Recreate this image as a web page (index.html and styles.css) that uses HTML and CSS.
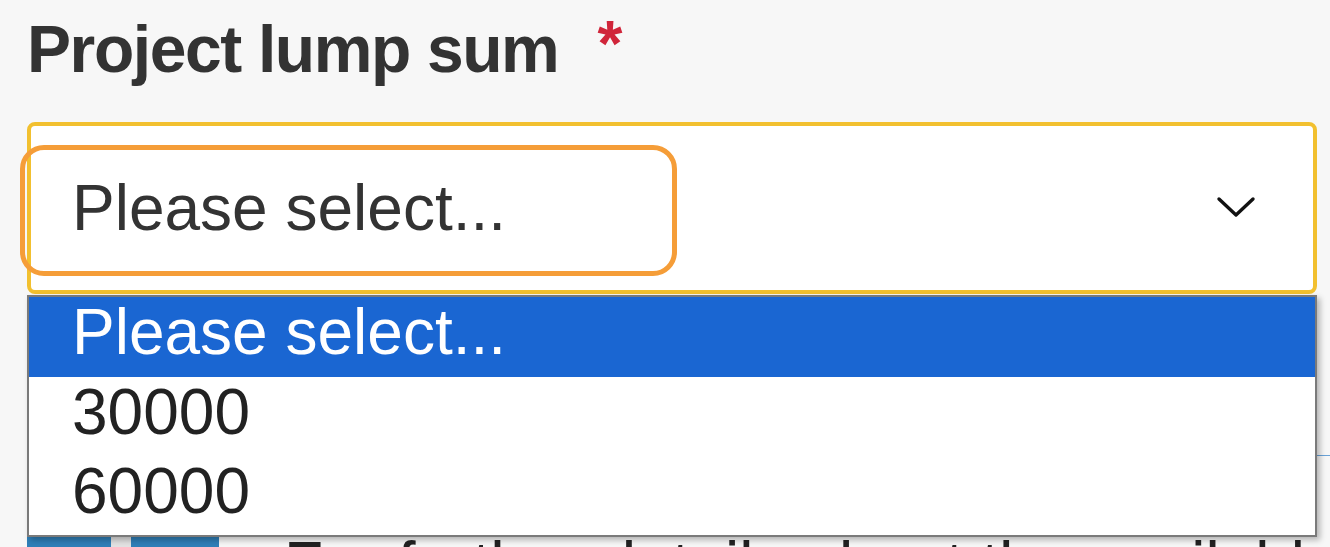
FILE: index.html
```html
<!DOCTYPE html>
<html lang="en">
<head>
<meta charset="utf-8">
<title>Project lump sum</title>
<link rel="stylesheet" href="styles.css">
</head>
<body>
<div class="page">
  <label class="label">Project lump sum<span class="req">*</span></label>
  <div class="field">
    <div class="select">
      <span class="value">Please select...</span>
      <svg class="chev" width="40" height="24" viewBox="0 0 40 24"><path d="M3 4 L20 20 L37 4" fill="none" stroke="#111" stroke-width="3.4" stroke-linecap="round" stroke-linejoin="round"/></svg>
    </div>
    <ul class="menu">
      <li class="opt active">Please select...</li>
      <li class="opt">30000</li>
      <li class="opt">60000</li>
    </ul>
    <div class="highlight"></div>
  </div>
  <div class="hidden-area"></div>
  <div class="notice">
    <div class="tabs">
      <span class="tab"></span>
      <span class="sep"></span>
      <span class="tab tab2"></span>
    </div>
    <p class="notice-text">For further details about the available</p>
  </div>
</div>
</body>
</html>
```

FILE: styles.css
```css
html, body {
  margin: 0;
  padding: 0;
  background: #f7f7f7;
  overflow: hidden;
}
body {
  font-family: "Liberation Sans", Arial, sans-serif;
  color: #333;
}
.page {
  padding: 17px 13px 0 27px;
  height: 547px;
  box-sizing: border-box;
}
.label {
  display: block;
  height: 64px;
  font-size: 66px;
  font-weight: 700;
  line-height: 64px;
  letter-spacing: -1.4px;
  color: #333;
}
.req {
  color: #d0253a;
  font-size: 64px;
  line-height: 0;
  letter-spacing: 0;
  margin-left: 39px;
  vertical-align: 6px;
}
.field {
  position: relative;
  margin-top: 41px;
}
.select {
  height: 172px;
  box-sizing: border-box;
  border: 4px solid #f2c02f;
  border-radius: 8px;
  background: #fff;
  display: flex;
  align-items: center;
  justify-content: space-between;
  padding: 0 57px 0 41px;
}
.value {
  font-size: 64px;
  line-height: 72px;
  color: #333;
}
.chev {
  display: block;
  margin-top: -2px;
}
.menu {
  position: absolute;
  left: 0;
  right: 0;
  top: calc(100% + 1px);
  margin: 0;
  padding: 0;
  list-style: none;
  background: #fff;
  border: 2px solid #7a7a7a;
  box-shadow: 3px 3px 6px rgba(0, 0, 0, 0.28);
  z-index: 2;
}
.opt {
  font-size: 64px;
  line-height: 71px;
  padding: 0 0 8px 43px;
  color: #222;
}
.opt.active {
  background: #1a66d2;
  color: #fff;
  padding-bottom: 9px;
}
.highlight {
  position: absolute;
  left: -7px;
  top: 23px;
  width: 657px;
  height: 131px;
  box-sizing: border-box;
  border: 5px solid #f59d38;
  border-radius: 24px;
  z-index: 3;
}
.hidden-area {
  height: 161px;
  border-bottom: 1px solid #6aa3d8;
  margin-right: -13px;
}
.notice {
  display: flex;
  align-items: flex-start;
  margin-top: 81px;
}
.tabs {
  display: flex;
  height: 60px;
}
.tab {
  width: 84px;
  background: #2f7fb8;
}
.tab2 {
  width: 88px;
}
.sep {
  width: 20px;
  background: #e2e2e2;
}
.notice-text {
  margin: 0 0 0 65px;
  font-size: 64px;
  line-height: 56px;
  color: #222;
  white-space: nowrap;
}
```
